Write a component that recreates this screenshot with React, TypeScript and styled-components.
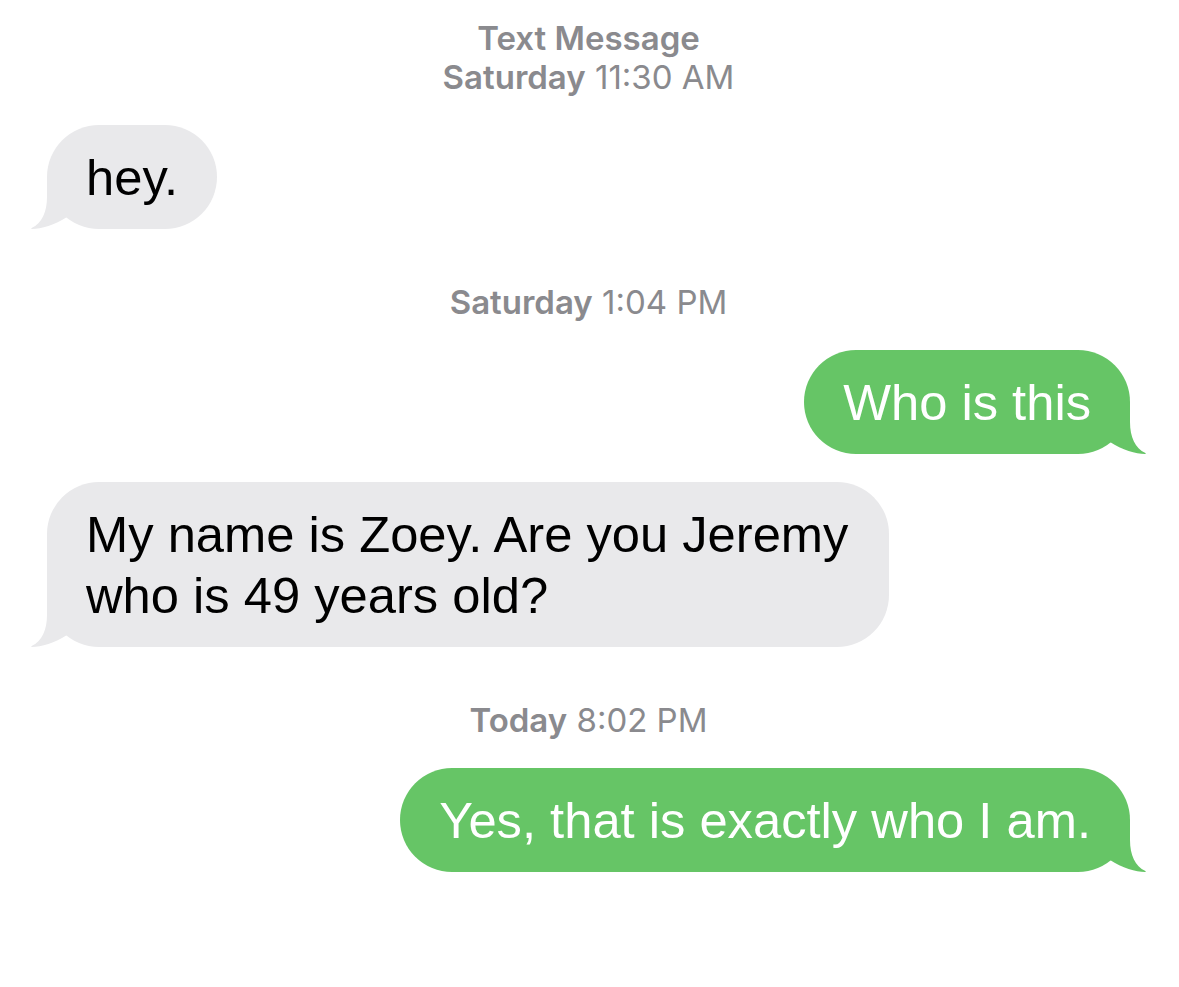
import React from "react";
import styled, { createGlobalStyle } from "styled-components";

const GlobalStyle = createGlobalStyle`
  html, body {
    margin: 0;
    padding: 0;
    background: #ffffff;
  }
  body {
    font-family: "Liberation Sans", Arial, sans-serif;
    -webkit-font-smoothing: antialiased;
  }
`;

const Thread = styled.main`
  display: flex;
  flex-direction: column;
  padding: 19px 49px 40px 47px;
`;

const Stamp = styled.div<{ $first?: boolean }>`
  font-family: Inter, "Liberation Sans", sans-serif;
  font-size: 33px;
  line-height: 39px;
  color: #8a8a8e;
  text-align: center;
  margin-top: ${(p) => (p.$first ? "0" : "54px")};
  margin-bottom: 28px;
  font-weight: 400;
`;

const Strong = styled.span`
  font-weight: 600;
`;

const Line = styled.div``;

const Row = styled.div<{ $side: "left" | "right" }>`
  display: flex;
  justify-content: ${(p) => (p.$side === "left" ? "flex-start" : "flex-end")};
  & + & {
    margin-top: 28px;
  }
`;

const Bubble = styled.div<{ $side: "left" | "right" }>`
  position: relative;
  max-width: 842px;
  box-sizing: border-box;
  padding: 22px 39px 21px;
  border-radius: 52px;
  font-size: 50.7px;
  line-height: 61px;
  background: ${(p) => (p.$side === "left" ? "#e9e9eb" : "#66c566")};
  color: ${(p) => (p.$side === "left" ? "#000000" : "#ffffff")};
`;

const TailSvg = styled.svg<{ $side: "left" | "right" }>`
  position: absolute;
  bottom: 0;
  width: 36px;
  height: 52px;
  ${(p) =>
    p.$side === "left"
      ? "left: -16px;"
      : "right: -16px; transform: scaleX(-1);"}
`;

const Tail: React.FC<{ side: "left" | "right"; color: string }> = ({ side, color }) => (
  <TailSvg $side={side} viewBox="-16 -52 36 52" aria-hidden="true">
    <path
      d="M0,-52 L0,-32 C0,-17 -5,-6 -15.4,-0.9 C-16.2,-0.4 -15.8,0 -15,0 C-6,0 8,-4 20,-12 L20,-52 Z"
      fill={color}
    />
  </TailSvg>
);

type Msg =
  | { kind: "stamp"; bold: string; rest: string; first?: boolean; title?: string }
  | { kind: "msg"; side: "left" | "right"; text: string };

const items: Msg[] = [
  { kind: "stamp", title: "Text Message", bold: "Saturday", rest: " 11:30 AM", first: true },
  { kind: "msg", side: "left", text: "hey." },
  { kind: "stamp", bold: "Saturday", rest: " 1:04 PM" },
  { kind: "msg", side: "right", text: "Who is this" },
  { kind: "msg", side: "left", text: "My name is Zoey. Are you Jeremy who is 49 years old?" },
  { kind: "stamp", bold: "Today", rest: " 8:02 PM" },
  { kind: "msg", side: "right", text: "Yes, that is exactly who I am." },
];

export default function App() {
  return (
    <>
      <GlobalStyle />
      <Thread>
        {items.map((it, i) =>
          it.kind === "stamp" ? (
            <Stamp key={i} $first={it.first}>
              {it.title && (
                <Line>
                  <Strong>{it.title}</Strong>
                </Line>
              )}
              <Line>
                <Strong>{it.bold}</Strong>
                {it.rest}
              </Line>
            </Stamp>
          ) : (
            <Row key={i} $side={it.side}>
              <Bubble $side={it.side}>
                {it.text}
                <Tail side={it.side} color={it.side === "left" ? "#e9e9eb" : "#66c566"} />
              </Bubble>
            </Row>
          )
        )}
      </Thread>
    </>
  );
}
